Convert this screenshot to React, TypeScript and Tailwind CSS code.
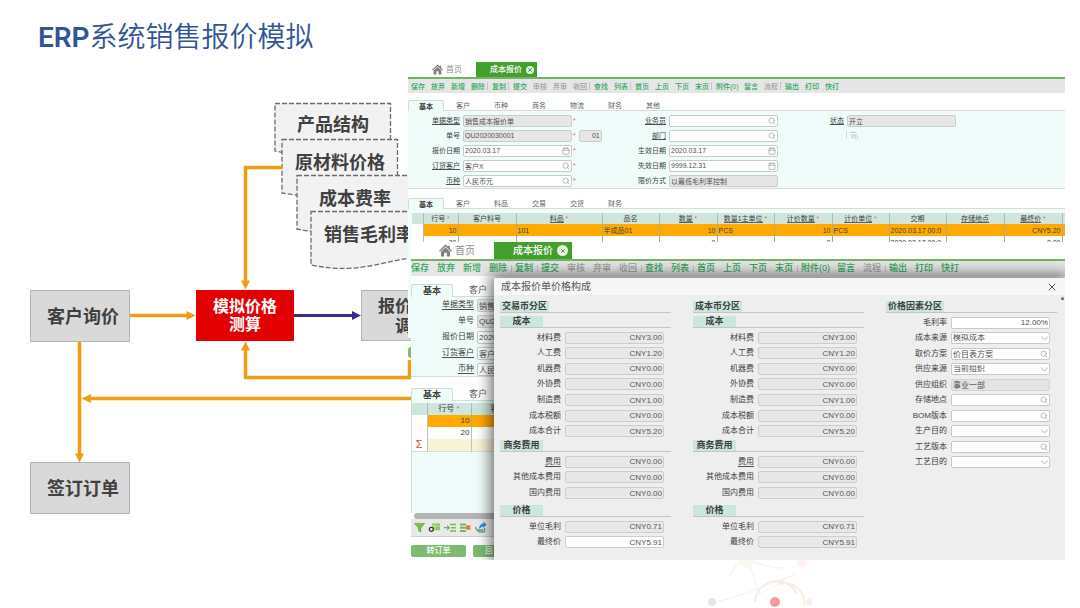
import { useId } from "react";
import type { ReactNode } from "react";
import clsx from "clsx";
import { Calendar, Search, X } from "lucide-react";

type FieldIcon = "search" | "calendar";

type FieldData = {
    label: string;
    value?: string;
    icon?: FieldIcon;
    readOnly?: boolean;
    required?: boolean;
    underline?: boolean;
    extra?: string;
};

const TOOLBAR_ITEMS = [
    { label: "保存" },
    { label: "放弃" },
    { label: "新增" },
    { label: "删除", divider: true },
    { label: "复制", divider: true },
    { label: "提交" },
    { label: "审核", muted: true },
    { label: "弃审", muted: true },
    { label: "收回", muted: true, divider: true },
    { label: "查找" },
    { label: "列表", divider: true },
    { label: "首页" },
    { label: "上页" },
    { label: "下页" },
    { label: "末页", divider: true },
    { label: "附件(0)", wide: true },
    { label: "留言" },
    { label: "流程", muted: true, divider: true },
    { label: "输出" },
    { label: "打印" },
    { label: "快打" },
];

const GENERAL_FIELDS: FieldData[] = [
    { label: "单据类型", value: "销售成本报价单", readOnly: true, required: true, underline: true },
    { label: "单号", value: "QU2020030001", readOnly: true, required: true, extra: "01" },
    { label: "报价日期", value: "2020.03.17", icon: "calendar", required: true },
    { label: "订货客户", value: "客户X", icon: "search", required: true, underline: true },
    { label: "币种", value: "人民币元", icon: "search", required: true, underline: true },
];

const VALIDITY_FIELDS: FieldData[] = [
    { label: "业务员", icon: "search", underline: true },
    { label: "部门", icon: "search", underline: true },
    { label: "生效日期", value: "2020.03.17", icon: "calendar" },
    { label: "失效日期", value: "9999.12.31", icon: "calendar" },
    { label: "限价方式", value: "以最低毛利率控制", readOnly: true },
];

const QUOTE_COLUMNS = [
    { label: "行号", required: true, width: "w-[35px]" },
    { label: "客户料号", width: "w-[58px]" },
    { label: "料品", required: true, underline: true, width: "w-[86px]" },
    { label: "品名", width: "w-[57px]" },
    { label: "数量", required: true, underline: true, width: "w-[58px]" },
    { label: "数量1主单位", required: true, underline: true, width: "w-[57px]" },
    { label: "计价数量", required: true, underline: true, width: "w-[58px]" },
    { label: "计价单位", required: true, underline: true, width: "w-[57px]" },
    { label: "交期", width: "w-[57px]" },
    { label: "存储地点", underline: true, width: "w-[58px]" },
    { label: "最终价", required: true, underline: true, width: "w-[58px]" },
];

const QUOTE_ROWS = [
    ["10", "", "101", "半成品01", "10", "PCS", "10", "PCS", "2020.03.17 00:0", "", "CNY5.20"],
    ["20", "", "", "", "0", "", "0", "", "2020.03.17 00:0", "", "0.00"],
];

const RIGHT_ALIGNED = [0, 4, 6, 10];

const COST_ROWS = [
    ["材料费", "CNY3.00"],
    ["人工费", "CNY1.20"],
    ["机器费", "CNY0.00"],
    ["外协费", "CNY0.00"],
    ["制造费", "CNY1.00"],
    ["成本税额", "CNY0.00"],
    ["成本合计", "CNY5.20"],
];

const BUSINESS_ROWS = [
    ["费用", "CNY0.00"],
    ["其他成本费用", "CNY0.00"],
    ["国内费用", "CNY0.00"],
];

const FACTORS: { label: string; value?: string; kind: "percent" | "select" | "search" | "locked" }[] = [
    { label: "毛利率", value: "12.00%", kind: "percent" },
    { label: "成本来源", value: "模拟成本", kind: "select" },
    { label: "取价方案", value: "价目表方案", kind: "search" },
    { label: "供应来源", value: "当前组织", kind: "select" },
    { label: "供应组织", value: "事业一部", kind: "locked" },
    { label: "存储地点", kind: "search" },
    { label: "BOM版本", kind: "search" },
    { label: "生产目的", kind: "select" },
    { label: "工艺版本", kind: "search" },
    { label: "工艺目的", kind: "select" },
];

export default function App() {
    return (
        <main className="relative min-h-screen overflow-hidden bg-white font-['Liberation_Sans','Noto_Sans_CJK_SC',sans-serif] text-[#404040]">
            <FlowDiagram />
            <FooterOrnament />
            <h1 className="flex h-[62px] items-center pt-[13px] pl-[38px] font-['Roboto','Noto_Sans_CJK_SC',sans-serif] text-[28px] leading-none font-[350] text-[#2f5597]">
                <span className="font-semibold">ERP</span>
                系统销售报价模拟
            </h1>
            <div className="relative mr-[15px] ml-[408px]">
                <QuoteWindow />
                <div className="flex">
                    <div className="w-[3px] shrink-0">
                        <div className="h-[97px] border-b border-[#c8d6d2] bg-[#effcf9]" />
                        <div className="mt-[8px] h-[11px] rounded-l-sm bg-[#7dbb70]" />
                    </div>
                    <SimulationWindow />
                </div>
            </div>
        </main>
    );
}

/* ---------- process diagram ---------- */

function FlowDiagram() {
    return (
        <section aria-label="报价流程">
            <svg
                className="absolute top-0 left-0"
                width="460"
                height="608"
                viewBox="0 0 460 608"
                fill="none"
                aria-hidden="true"
            >
                <g fill="#f2f2f2" stroke="#6b6b6b" strokeWidth="1.3" strokeDasharray="5 2">
                    <path d="M275 103.500H390.500V146C350 146 330 163 275 151Z" />
                    <path d="M282 139.500H397.500V184C357 184 337 203 282 193Z" />
                    <path d="M297 175.500H412.500V220C372 220 352 240 297 229Z" />
                    <path d="M311 211.500H427V257C387 257 365 276 311 265Z" />
                </g>
                <g stroke="#f39c12" strokeWidth="3.500">
                    <path d="M282 167.500H245.500V281" />
                    <path d="M130 315.500H187" />
                    <path d="M79.500 341V454" />
                    <path d="M409.500 360V377.500H245.500V350" />
                    <path d="M411 398.500H90" />
                </g>
                <g fill="#f39c12">
                    <path d="M241 280.500h9l-4.500 9z" />
                    <path d="M186.500 311v9l9-4.500z" />
                    <path d="M75 453.500h9l-4.500 9z" />
                    <path d="M241 350.500h9l-4.500-9z" />
                    <path d="M91 394v9l-9.500-4.500z" />
                </g>
                <path d="M294 315.500H353" stroke="#342f8f" strokeWidth="3" />
                <path d="M352 311v9l9-4.500z" fill="#342f8f" />
            </svg>

            <DocLabel className="top-[111px] left-[275px]">产品结构</DocLabel>
            <DocLabel className="top-[149px] left-[282px]">原材料价格</DocLabel>
            <DocLabel className="top-[185px] left-[297px]">成本费率</DocLabel>
            <DocLabel className="top-[221px] left-[311px]">销售毛利率</DocLabel>

            <FlowNode className="top-[290px] left-[30px]">客户询价</FlowNode>
            <FlowNode className="top-[462px] left-[30px]">签订订单</FlowNode>
            <div className="absolute top-[290px] left-[196px] flex h-[51px] w-[98px] items-center justify-center bg-[#e20000] text-center text-[16px] leading-[18px] font-bold text-white">
                模拟价格
                <br />
                测算
            </div>
            <div className="absolute top-[290px] left-[361px] h-[51px] w-[98px] border border-[#b4b4b4] bg-[#d9d9d9] pt-[6px] pl-[16px] text-[17px] leading-[20px] font-bold">
                报价
                <br />
                <span className="pl-[17px]">调</span>
            </div>
        </section>
    );
}

function DocLabel({ className, children }: { className: string; children: ReactNode }) {
    return (
        <div
            className={clsx(
                "absolute w-[116px] text-center text-[18px] leading-[28px] font-bold whitespace-nowrap",
                className,
            )}
        >
            {children}
        </div>
    );
}

function FlowNode({ className, children }: { className: string; children: ReactNode }) {
    return (
        <div
            className={clsx(
                "absolute flex h-[52px] w-[100px] items-center justify-center border border-[#b4b4b4] bg-[#d9d9d9] pt-[2px] pl-[6px] text-[18px] leading-none font-bold",
                className,
            )}
        >
            {children}
        </div>
    );
}

function FooterOrnament() {
    return (
        <svg
            className="absolute bottom-0 left-[700px]"
            width="140"
            height="50"
            viewBox="0 0 140 50"
            fill="none"
            aria-hidden="true"
        >
            <path d="M30 18C34 8 40 3 48 3S68 10 84 10" stroke="#f9f4e8" strokeWidth="1.500" />
            <path d="M12 45C38 39 62 30 95 16M48 3L60 36L95 16M60 36L76 46" stroke="#f6f1ef" />
            <path d="M55 44a22 22 0 0 1 42-8" stroke="#f8eaea" strokeWidth="2" />
            <path d="M78 26a20 20 0 0 1 26 22" stroke="#f6f0dc" strokeWidth="2" />
            <circle cx="12" cy="44" r="4" fill="#e8e2e5" />
            <circle cx="47" cy="3" r="7" fill="#f8faec" />
            <circle cx="102" cy="5" r="5" fill="#fdf1f3" />
            <circle cx="75" cy="44" r="5" fill="#ee9c9c" />
            <circle cx="109" cy="44" r="3" fill="#f4ecee" />
        </svg>
    );
}

/* ---------- shared window chrome ---------- */

function WindowHeader({ large = false }: { large?: boolean }) {
    return (
        <header
            className={clsx(
                "flex border-b-2 border-[#76b367] leading-none",
                large ? "h-[19px] text-[10px]" : "h-[17px] text-[8px]",
            )}
        >
            <a
                href="#home"
                className={clsx(
                    "flex items-center gap-[3px] text-[#8c8c8c]",
                    large ? "w-[83px] pl-[28px]" : "w-[68px] pl-[24px]",
                )}
            >
                <svg
                    viewBox="0 0 12 12"
                    className={large ? "size-[13px]" : "size-[11px]"}
                    fill="#7f7f7f"
                    aria-hidden="true"
                >
                    <path d="M6 .5 0 6.200l.9.9L6 2.400l5.100 4.700.9-.9-2-1.900V1.500H8.500v1.300z" />
                    <path d="M6 3.300 1.800 7.100V11.500h3V8h2.400v3.500h3V7.100z" />
                </svg>
                首页
            </a>
            <div
                className={clsx(
                    "flex items-center justify-end gap-[4px] bg-[#44a02c] font-medium text-white",
                    large ? "w-[78px] pr-[4px]" : "w-[61px] pr-[3px]",
                )}
            >
                成本报价
                <button
                    type="button"
                    aria-label="关闭页签"
                    className={clsx(
                        "flex items-center justify-center rounded-full bg-[#e7f5e2] text-[#44a02c]",
                        large ? "size-[11px]" : "size-[8px]",
                    )}
                >
                    <X className="size-[6px]" strokeWidth={4} aria-hidden="true" />
                </button>
            </div>
        </header>
    );
}

function Toolbar({ large = false }: { large?: boolean }) {
    return (
        <div
            className={clsx(
                "flex items-center bg-[#e6e6e6] leading-none font-medium whitespace-nowrap",
                large ? "h-[15px] text-[9px]" : "h-[14px] pl-[3px] text-[7px]",
            )}
        >
            {TOOLBAR_ITEMS.map((item) => (
                <span key={item.label} className="flex items-center">
                    <button
                        type="button"
                        className={clsx(
                            "text-left",
                            item.muted ? "text-[#a0a0a0]" : "text-[#2fa65c]",
                            item.wide
                                ? large
                                    ? "w-[36px]"
                                    : "w-[28px]"
                                : large
                                  ? "w-[26px]"
                                  : "w-[20px]",
                            item.divider && "-mr-[4px]",
                        )}
                    >
                        {item.label}
                    </button>
                    {item.divider ? (
                        <span
                            className={clsx(
                                "h-[8px] border-l border-[#c4c4c4]",
                                large ? "mr-[3px]" : "mr-[4px]",
                            )}
                        />
                    ) : null}
                </span>
            ))}
        </div>
    );
}

function FormTabs({ tabs, large = false }: { tabs: string[]; large?: boolean }) {
    return (
        <div
            role="tablist"
            className={clsx(
                "flex leading-none whitespace-nowrap",
                large ? "h-[13px] text-[9px]" : "h-[11px] text-[7px]",
            )}
        >
            {tabs.map((tab, index) => (
                <button
                    key={tab}
                    type="button"
                    role="tab"
                    aria-selected={index === 0}
                    className={clsx(
                        "shrink-0 text-center",
                        index === 0
                            ? "rounded-t-[2px] border border-b-0 border-[#cddcd8] bg-[#effcf9] font-bold"
                            : "border-b border-[#d5dedb] text-[#606060]",
                        index === 0
                            ? large
                                ? "w-[42px]"
                                : "w-[36px]"
                            : large
                              ? "w-[50px]"
                              : "w-[38px]",
                    )}
                >
                    {tab}
                </button>
            ))}
            <span className="grow border-b border-[#d5dedb]" />
        </div>
    );
}

function Required() {
    return <span className="text-[#f0703a]">*</span>;
}

function FormField({ field, large = false }: { field: FieldData; large?: boolean }) {
    const id = useId();

    return (
        <div
            className={clsx(
                "flex items-center gap-[3px] leading-none",
                large ? "h-[16px] text-[8px]" : "h-[15px] text-[7px]",
            )}
        >
            <label
                htmlFor={id}
                className={clsx(
                    "shrink-0 text-right whitespace-nowrap",
                    large ? "w-[63px]" : "w-[52px]",
                )}
            >
                <span className={clsx(field.underline && "border-b border-[#505050]")}>
                    {field.label}
                </span>
            </label>
            <span className="relative flex w-[109px] shrink-0">
                <input
                    id={id}
                    defaultValue={field.value}
                    readOnly={field.readOnly}
                    className={clsx(
                        "w-full rounded-[2px] border px-px text-[#505050]",
                        large ? "h-[13px]" : "h-[12px]",
                        field.readOnly
                            ? "border-[#cccccc] bg-[#e6e6e6]"
                            : "border-[#c3cdca] bg-white",
                    )}
                />
                {field.icon ? <FieldGlyph icon={field.icon} /> : null}
            </span>
            {field.required ? (
                <span className="-ml-[2px]">
                    <Required />
                </span>
            ) : null}
            {field.extra ? (
                <input
                    aria-label="版本"
                    readOnly
                    defaultValue={field.extra}
                    className="h-[12px] w-[23px] rounded-[2px] border border-[#cccccc] bg-[#e6e6e6] pr-px text-right text-[#505050]"
                />
            ) : null}
        </div>
    );
}

function FieldGlyph({ icon }: { icon: FieldIcon }) {
    const Glyph = icon === "search" ? Search : Calendar;

    return (
        <Glyph
            className="pointer-events-none absolute top-[2px] right-[2px] size-[8px] text-[#9a9a9a]"
            strokeWidth={2}
            aria-hidden="true"
        />
    );
}

/* ---------- first window: quote form ---------- */

function QuoteWindow() {
    return (
        <section aria-label="成本报价" className="bg-white">
            <WindowHeader />
            <Toolbar />
            <div className="h-[7px]" />
            <FormTabs tabs={["基本", "客户", "币种", "商务", "物流", "财务", "其他"]} />
            <form className="flex h-[78px] border-b border-[#d5dedb] bg-[#effcf9] pt-[2px]">
                <div className="w-[206px]">
                    {GENERAL_FIELDS.map((field) => (
                        <FormField key={field.label} field={field} />
                    ))}
                </div>
                <div className="w-[178px]">
                    {VALIDITY_FIELDS.map((field) => (
                        <FormField key={field.label} field={field} />
                    ))}
                </div>
                <div>
                    <FormField
                        field={{ label: "状态", value: "开立", readOnly: true, underline: true }}
                    />
                    <div className="flex gap-[3px] pt-[3px] pl-[54px]">
                        <span className="h-[8px] border-l border-[#cfd6d8]" />
                        <svg viewBox="0 0 10 10" className="size-[9px]" fill="none" stroke="#c9bfc6" aria-hidden="true">
                            <path d="M0 1.500h7M2 4.500h5M2 4.500v3h2" />
                            <circle cx="7" cy="7" r="1.800" />
                        </svg>
                    </div>
                </div>
            </form>
            <div className="h-[9px]" />
            <FormTabs tabs={["基本", "客户", "料品", "交易", "交货", "财务"]} />
            <div className="h-[33px] overflow-hidden bg-[#effcf9] pt-[4px] pl-[4px]">
                <table className="w-full table-fixed border-collapse bg-white text-[7px] leading-none whitespace-nowrap">
                    <thead>
                        <tr className="h-[11px] bg-[#cfe6dd]">
                            <th className="w-[11px] border-r border-[#a9bdb5]" />
                            {QUOTE_COLUMNS.map((column) => (
                                <th
                                    key={column.label}
                                    className={clsx(
                                        "border-r border-[#a9bdb5] p-0 text-center font-normal",
                                        column.width,
                                    )}
                                >
                                    <span
                                        className={clsx(
                                            column.underline && "border-b border-[#606060]",
                                        )}
                                    >
                                        {column.label}
                                    </span>
                                    {column.required ? (
                                        <>
                                            {" "}
                                            <Required />
                                        </>
                                    ) : null}
                                </th>
                            ))}
                            <th />
                        </tr>
                    </thead>
                    <tbody>
                        {QUOTE_ROWS.map((row, rowIndex) => (
                            <tr
                                key={row[0]}
                                className={clsx("h-[12px]", rowIndex === 0 && "bg-[#ffaa00]")}
                            >
                                <td className="border-r border-[#b8b8b8] bg-white p-0" />
                                {row.map((cell, index) => (
                                    <td
                                        key={QUOTE_COLUMNS[index].label}
                                        className={clsx(
                                            "overflow-hidden border-r border-[#b8a880] px-px py-0",
                                            RIGHT_ALIGNED.includes(index) && "text-right",
                                        )}
                                    >
                                        {cell}
                                    </td>
                                ))}
                                <td />
                            </tr>
                        ))}
                    </tbody>
                </table>
            </div>
        </section>
    );
}

/* ---------- second window: price simulation ---------- */

function SimulationWindow() {
    return (
        <section aria-label="模拟价格测算" className="relative min-w-0 grow overflow-hidden bg-white">
            <WindowHeader large />
            <Toolbar large />
            <div className="h-[8px]" />
            <FormTabs large tabs={["基本", "客户"]} />
            <form className="h-[80px] border-b border-[#d5dedb] bg-[#effcf9]">
                {GENERAL_FIELDS.map((field) => (
                    <FormField key={field.label} field={{ ...field, extra: undefined }} large />
                ))}
            </form>
            <div className="h-[11px]" />
            <FormTabs large tabs={["基本", "客户"]} />
            <div className="h-[112px] border-l border-[#cddcd8] bg-[#effcf9] pt-[2px]">
                <table className="w-full table-fixed border-collapse bg-white text-[8px] leading-none">
                    <thead>
                        <tr className="h-[12px] bg-[#cfe6dd]">
                            <th className="w-[15px] border-r border-[#a9bdb5] p-0" />
                            <th className="w-[44px] border-r border-[#a9bdb5] p-0 font-normal">
                                行号 <Required />
                            </th>
                            <th className="p-0 pl-[19px] text-left font-normal">客户料号</th>
                        </tr>
                    </thead>
                    <tbody>
                        <tr className="h-[12px]">
                            <td className="border-r border-[#c4c4c4] p-0" />
                            <td className="border-r border-[#b8a880] bg-[#ffaa00] px-px py-0 text-right">10</td>
                            <td className="bg-[#ffaa00] p-0" />
                        </tr>
                        <tr className="h-[12px]">
                            <td className="border-r border-[#c4c4c4] p-0" />
                            <td className="border-r border-[#c4c4c4] px-px py-0 text-right">20</td>
                            <td className="p-0" />
                        </tr>
                        <tr className="h-[12px] border-b border-[#d5dedb]">
                            <td className="border-r border-[#c4c4c4] p-0 text-center text-[11px] text-[#e8453c]">
                                Σ
                            </td>
                            <td className="border-r border-[#c4c4c4] bg-[#f8f3d3] p-0" />
                            <td className="bg-[#f8f3d3] p-0" />
                        </tr>
                    </tbody>
                </table>
            </div>
            <div className="ml-[3px] h-[6px] rounded-l-full bg-[#b4b4b4]" />
            <GridActions />
            <div className="flex gap-[7px] pt-[8px] pb-[3px] text-[8px] leading-none font-medium text-white">
                <button type="button" className="h-[12px] w-[55px] rounded-[2px] bg-[#7dbb70]">
                    转订单
                </button>
                <button type="button" className="h-[12px] w-[55px] rounded-[2px] bg-[#7dbb70] pl-[12px] text-left">
                    回
                </button>
            </div>
            <PriceDialog />
        </section>
    );
}

function GridActions() {
    return (
        <div className="flex h-[18px] items-center gap-[3px] border-b border-[#cfcfcf] bg-[#e9e9e9] pl-[3px]">
            <button type="button" aria-label="筛选">
                <svg viewBox="0 0 12 12" className="size-[11px]" aria-hidden="true">
                    <path d="M.5 1.500h11L7.500 6.500V11L4.800 9.500v-3z" fill="#7cc142" stroke="#4e9a2c" strokeWidth=".6" />
                </svg>
            </button>
            <button type="button" aria-label="表格设置">
                <svg viewBox="0 0 13 12" className="h-[11px] w-[13px]" aria-hidden="true">
                    <path d="M4 1.500h8.500V9H4z" fill="#8ecb5e" />
                    <path d="M4 4.500h8.500M7 1.500V9" stroke="#d9f0c8" strokeWidth=".6" />
                    <circle cx="3" cy="8" r="2.200" fill="#e9e9e9" stroke="#333333" strokeWidth="1.300" />
                </svg>
            </button>
            <button type="button" aria-label="插入行">
                <svg viewBox="0 0 12 12" className="size-[12px]" fill="none" aria-hidden="true">
                    <path d="M6 2.500h6M7 5.800h5M6 9h6" stroke="#77ba55" strokeWidth="1.400" />
                    <path d="M0 5.800h5M3 3.500l2.500 2.300L3 8" stroke="#5b8f4c" />
                </svg>
            </button>
            <button type="button" aria-label="删除行">
                <svg viewBox="0 0 12 12" className="size-[12px]" fill="none" aria-hidden="true">
                    <path d="M1 2.500h6M1 5.800h7M1 9h6" stroke="#77ba55" strokeWidth="2" />
                    <path d="M7.500 3.500l3.500 4M11 3.500l-3.500 4" stroke="#f0703a" strokeWidth="2" />
                </svg>
            </button>
            <button type="button" aria-label="导出">
                <svg viewBox="0 0 13 12" className="h-[13px] w-[13px]" fill="none" aria-hidden="true">
                    <path d="M1.500 5.500C2.500 10 6 11.500 10.500 10V6.500" stroke="#79a86a" strokeWidth="1.500" />
                    <path d="M4 8.500h5" stroke="#6b8f9c" strokeWidth="1.500" />
                    <path d="M5 7.500C5 4 7.500 2 9.500 2V0L12.500 3 9.500 6.500V5C8 5 6.500 6 5 7.500z" fill="#2f8fd0" />
                </svg>
            </button>
        </div>
    );
}

function PriceDialog() {
    return (
        <div
            role="dialog"
            aria-label="成本报价单价格构成"
            className="absolute inset-y-0 top-[36px] right-0 left-[83px] bg-[#eeeeee] shadow-[0_0_14px_3px_rgba(0,0,0,0.6)]"
        >
            <div className="flex h-[17px] items-center justify-between bg-[#f7f7f7] pr-[7px] pl-[7px]">
                <h2 className="text-[10px] leading-none text-[#555555]">成本报价单价格构成</h2>
                <button type="button" aria-label="关闭">
                    <X className="size-[12px] text-[#555555]" aria-hidden="true" />
                </button>
            </div>
            <span className="absolute top-[19px] right-px h-[3px] w-[3px] rounded-t-full bg-[#777777]" />
            <div className="grid grid-cols-3 gap-x-[22px] pt-[6px] pr-[8px] pl-[6px]">
                <PriceColumn title="交易币分区" editablePrice />
                <PriceColumn title="成本币分区" />
                <section>
                    <DialogHeading>价格因素分区</DialogHeading>
                    <div className="mt-[2px] grid h-[155px] auto-rows-fr">
                        {FACTORS.map((factor) => (
                            <FactorField key={factor.label} {...factor} />
                        ))}
                    </div>
                </section>
            </div>
        </div>
    );
}

function PriceColumn({ title, editablePrice = false }: { title: string; editablePrice?: boolean }) {
    return (
        <section>
            <DialogHeading>{title}</DialogHeading>
            <SubHeading className="mt-[3px]">成本</SubHeading>
            <div className="mt-[2px] grid h-[109px] auto-rows-fr">
                {COST_ROWS.map(([label, value]) => (
                    <PriceField key={label} label={label} value={value} />
                ))}
            </div>
            <SubHeading className="mt-px">商务费用</SubHeading>
            <div className="mt-[2px] grid h-[47px] auto-rows-fr">
                {BUSINESS_ROWS.map(([label, value]) => (
                    <PriceField key={label} label={label} value={value} underline={label === "费用"} />
                ))}
            </div>
            <SubHeading className="mt-[4px]">价格</SubHeading>
            <div className="mt-[2px] grid h-[31px] auto-rows-fr">
                <PriceField label="单位毛利" value="CNY0.71" />
                <PriceField label="最终价" value="CNY5.91" editable={editablePrice} />
            </div>
        </section>
    );
}

function DialogHeading({ children }: { children: ReactNode }) {
    return (
        <div className="flex h-[12px] border-b border-[#c4c4c4]">
            <h3 className="bg-[#cbe6dc] px-[2px] text-[9px] leading-[11px] font-bold">{children}</h3>
        </div>
    );
}

function SubHeading({ className, children }: { className: string; children: ReactNode }) {
    return (
        <div className={clsx("flex h-[12px] border-b border-[#c4c4c4]", className)}>
            <h4 className="w-[43px] bg-[#cbe6dc] text-center text-[9px] leading-[11px] font-bold">
                {children}
            </h4>
        </div>
    );
}

function PriceField({
    label,
    value,
    underline = false,
    editable = false,
}: {
    label: string;
    value: string;
    underline?: boolean;
    editable?: boolean;
}) {
    const id = useId();

    return (
        <div className="flex items-center gap-[4px] text-[8px] leading-none">
            <label htmlFor={id} className="w-[61px] shrink-0 text-right whitespace-nowrap">
                <span className={clsx(underline && "border-b border-[#505050]")}>{label}</span>
            </label>
            <input
                id={id}
                defaultValue={value}
                readOnly={!editable}
                className={clsx(
                    "h-[12px] w-[99px] rounded-[2px] border border-[#cdcdcd] px-px text-right text-[#555555]",
                    editable ? "bg-white" : "bg-[#e8e8e8]",
                )}
            />
        </div>
    );
}

function FactorField({ label, value, kind }: (typeof FACTORS)[number]) {
    const id = useId();
    const box = "h-[12px] w-full rounded-[2px] border px-px text-[#505050]";

    return (
        <div className="flex items-center gap-[4px] text-[8px] leading-none">
            <label htmlFor={id} className="w-[61px] shrink-0 text-right whitespace-nowrap">
                {label}
            </label>
            <span className="relative flex w-[99px]">
                {kind === "select" ? (
                    <>
                        <select
                            id={id}
                            defaultValue={value}
                            className={clsx(box, "appearance-none border-[#c8c8c8] bg-white")}
                        >
                            <option>{value}</option>
                        </select>
                        <svg
                            viewBox="0 0 10 6"
                            className="pointer-events-none absolute top-[4px] right-px h-[5px] w-[9px]"
                            fill="none"
                            stroke="#a0a0a0"
                            aria-hidden="true"
                        >
                            <path d="M1 1l4 3.500L9 1" />
                        </svg>
                    </>
                ) : (
                    <input
                        id={id}
                        defaultValue={value}
                        readOnly={kind === "locked"}
                        className={clsx(
                            box,
                            kind === "percent" && "text-right",
                            kind === "locked"
                                ? "border-[#d4d4d4] bg-[#e4e4e4]"
                                : "border-[#c8c8c8] bg-white",
                        )}
                    />
                )}
                {kind === "search" ? (
                    <Search
                        className="pointer-events-none absolute top-[2px] right-[2px] size-[8px] text-[#9a9a9a]"
                        aria-hidden="true"
                    />
                ) : null}
            </span>
        </div>
    );
}
